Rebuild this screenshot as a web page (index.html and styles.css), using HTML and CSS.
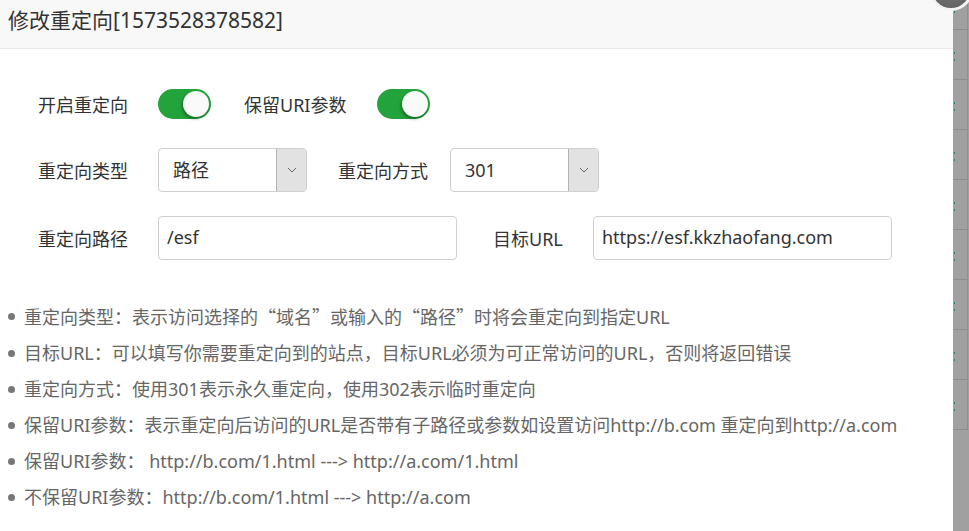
FILE: index.html
```html
<!DOCTYPE html>
<html lang="zh-CN">
<head>
<meta charset="utf-8">
<title>修改重定向</title>
<link rel="stylesheet" href="styles.css">
</head>
<body>
<div class="page">
  <div class="dialog">
    <div class="dlg-head">修改重定向[1573528378582]</div>
    <div class="dlg-body">
      <div class="row">
        <span class="label">开启重定向</span>
        <span class="switch"><span class="knob"></span></span>
        <span class="label label-b">保留URI参数</span>
        <span class="switch"><span class="knob"></span></span>
      </div>
      <div class="row">
        <span class="label">重定向类型</span>
        <div class="select">
          <span class="sel-text">路径</span>
          <span class="sel-arrow"><svg width="10" height="6" viewBox="0 0 10 6"><polyline points="1,1 5,5 9,1" fill="none" stroke="#666" stroke-width="1"/></svg></span>
        </div>
        <span class="label label-c">重定向方式</span>
        <div class="select">
          <span class="sel-text">301</span>
          <span class="sel-arrow"><svg width="10" height="6" viewBox="0 0 10 6"><polyline points="1,1 5,5 9,1" fill="none" stroke="#666" stroke-width="1"/></svg></span>
        </div>
      </div>
      <div class="row">
        <span class="label">重定向路径</span>
        <div class="input">/esf</div>
        <span class="label label-d">目标URL</span>
        <div class="input">https://esf.kkzhaofang.com</div>
      </div>
      <ul class="tips">
        <li>重定向类型：表示访问选择的<span class="q">“</span>域名<span class="q">”</span>或输入的<span class="q">“</span>路径<span class="q">”</span>时将会重定向到指定URL</li>
        <li>目标URL：可以填写你需要重定向到的站点，目标URL必须为可正常访问的URL，否则将返回错误</li>
        <li>重定向方式：使用301表示永久重定向，使用302表示临时重定向</li>
        <li>保留URI参数：表示重定向后访问的URL是否带有子路径或参数如设置访问http://b.com 重定向到http://a.com</li>
        <li>保留URI参数： http://b.com/1.html ---&gt; http://a.com/1.html</li>
        <li>不保留URI参数：http://b.com/1.html ---&gt; http://a.com</li>
      </ul>
    </div>
  </div>
  <div class="backdrop">
    <div class="bg-row"><i class="mark m1"></i></div>
    <div class="bg-row"><i class="mark"></i></div>
    <div class="bg-row"><i class="mark"></i></div>
    <div class="bg-row"><i class="mark"></i></div>
    <div class="bg-row"><i class="mark"></i></div>
    <div class="bg-row"><i class="mark"></i></div>
    <div class="bg-row"><i class="mark"></i></div>
    <div class="bg-row"><i class="mark"></i></div>
    <div class="bg-row"><i class="mark"></i></div>
  </div>
  <span class="close"></span>
</div>
</body>
</html>
```
FILE: styles.css
```css
html, body {
  margin: 0;
  padding: 0;
  height: 100%;
  overflow: hidden;
}
body {
  font-family: "Noto Sans", "Noto Sans CJK SC", sans-serif;
  color: #333;
  background: #a0a0a0;
}
.page {
  position: relative;
  display: flex;
  height: 531px;
  width: 969px;
}
.dialog {
  width: 953px;
  flex: none;
  background: #fff;
  height: 100%;
}
.dlg-head {
  height: 48px;
  line-height: 40px;
  border-bottom: 1px solid #e8e8e8;
  background: #f8f8f8;
  padding-left: 8px;
  font-size: 21px;
  color: #333;
}
.dlg-body {
  padding-top: 33px;
}
.row {
  display: flex;
  align-items: center;
  height: 44px;
  padding-left: 38px;
}
.row + .row {
  margin-top: 22px;
}
.row + .row + .row {
  margin-top: 24px;
}
.label {
  font-size: 18px;
  width: 120px;
  flex: none;
  color: #333;
  white-space: nowrap;
}
.label-b { width: 133px; margin-left: 33px; }
.label-c { width: 112px; margin-left: 31px; }
.label-d { width: 100px; margin-left: 36px; }
.switch {
  position: relative;
  display: block;
  width: 53px;
  height: 30px;
  border-radius: 15px;
  background: #22a33b;
  flex: none;
}
.knob {
  position: absolute;
  right: 2px;
  top: 2px;
  width: 26px;
  height: 26px;
  border-radius: 50%;
  background: #fafafa;
  box-shadow: -1px 2px 3px rgba(0,0,0,0.35);
}
.select {
  display: flex;
  width: 149px;
  height: 44px;
  box-sizing: border-box;
  border: 1px solid #cfcfcf;
  border-radius: 4px;
  flex: none;
  overflow: hidden;
}
.sel-text {
  flex: 1;
  font-size: 18px;
  line-height: 42px;
  padding-left: 14px;
  color: #333;
}
.sel-arrow {
  width: 29px;
  border-left: 1px solid #b4b4b4;
  background: #e2e2e2;
  display: flex;
  align-items: center;
  justify-content: center;
}
.input {
  width: 299px;
  height: 44px;
  box-sizing: border-box;
  border: 1px solid #cfcfcf;
  border-radius: 4px;
  font-size: 18px;
  line-height: 40px;
  padding-left: 8px;
  color: #333;
  flex: none;
}
.tips {
  list-style: none;
  margin: 38px 0 0 0;
  padding: 0;
}
.tips li {
  position: relative;
  padding-left: 24px;
  font-size: 18px;
  line-height: 36px;
  color: #666;
  white-space: nowrap;
}
.tips li::before {
  content: "";
  position: absolute;
  left: 8px;
  top: 15px;
  width: 7px;
  height: 7px;
  border-radius: 50%;
  background: #777;
}
.q {
  font-family: "Noto Sans CJK SC", sans-serif;
}
.backdrop {
  flex: 1;
  background: #a0a0a0;
}
.bg-row {
  position: relative;
  height: 49px;
  border-bottom: 1px solid #8c8c8c;
  border-right: 1px solid #8f8f8f;
  margin-right: 1px;
}
.bg-row:first-child {
  height: 29px;
}
.mark {
  position: absolute;
  left: 1px;
  top: 22px;
  width: 1px;
  height: 9px;
  border-top: 2px solid #2e7d74;
  border-bottom: 2px solid #2e7d74;
  box-sizing: border-box;
}
.m1 {
  top: 11px;
  height: 4px;
  border-bottom: 0;
}
.close {
  position: absolute;
  left: 929px;
  top: -33px;
  width: 38px;
  height: 38px;
  border-radius: 50%;
  background: radial-gradient(circle at 50% 40%, #7a7a7a, #5e5e5e);
  border: 3px solid #f4f4f4;
}
```
